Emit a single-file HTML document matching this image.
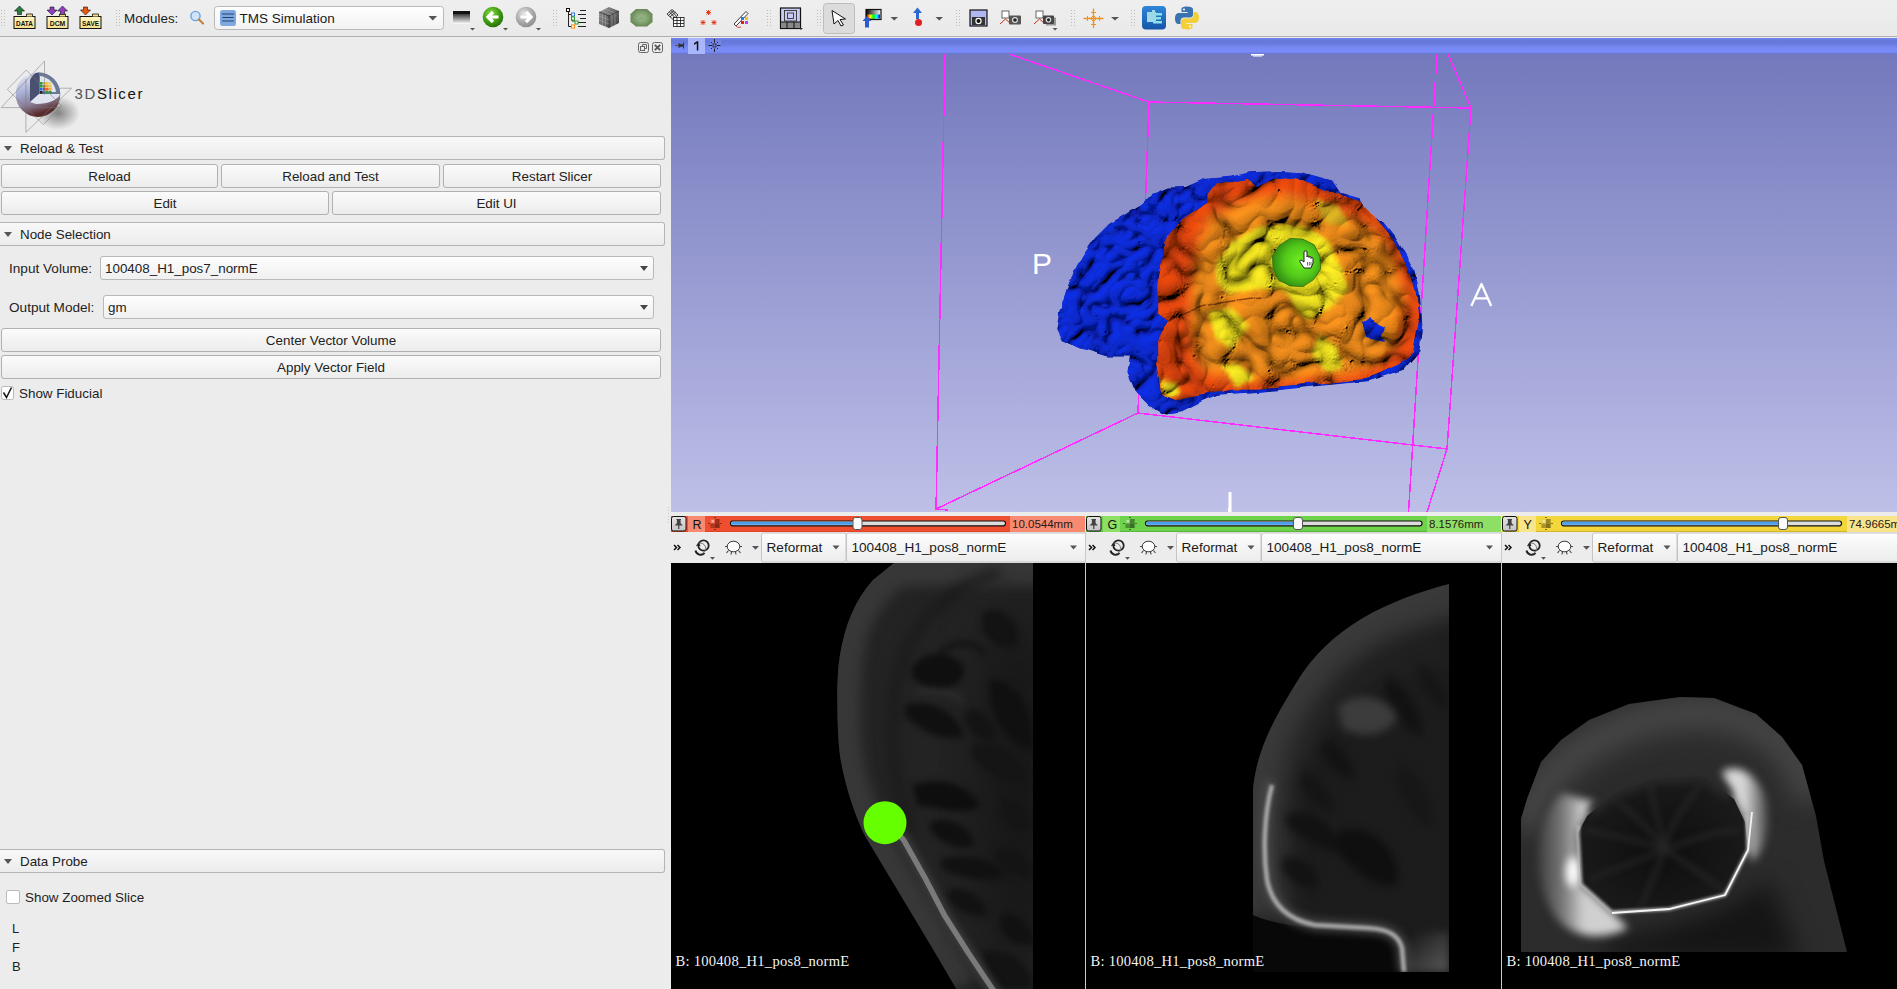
<!DOCTYPE html>
<html><head><meta charset="utf-8">
<style>
*{box-sizing:border-box;margin:0;padding:0}
html,body{width:1897px;height:989px;overflow:hidden;background:#ececec;font-family:"Liberation Sans",sans-serif;font-size:13px;color:#1e1e1e}
.a{position:absolute}
#tb{left:0;top:0;width:1897px;height:37px;background:#ececec;border-bottom:1px solid #b9b9b9}
.hdr{position:absolute;left:0;width:665px;height:24px;border:1px solid #b4b4b4;border-left:none;border-radius:0 3px 3px 0;background:linear-gradient(#f8f8f8,#ececec);}
.hdr .tri{position:absolute;left:4px;top:9px;width:0;height:0;border-left:4px solid transparent;border-right:4px solid transparent;border-top:5px solid #555}
.hdr span{position:absolute;left:20px;top:4px;font-size:13.4px;color:#222}
.btn{position:absolute;height:24px;border:1px solid #b1b1b1;border-radius:3px;background:linear-gradient(#fbfbfb,#ececec);text-align:center;line-height:22px;padding-top:1px;font-size:13.4px;color:#222}
.combo{position:absolute;height:24px;border:1px solid #b9b9b9;border-radius:3px;background:linear-gradient(#fdfdfd,#f0f0f0);font-size:13.4px;line-height:23px;padding-left:4px;color:#222}
.combo .dd{position:absolute;right:5px;top:9px;border-left:4.5px solid transparent;border-right:4.5px solid transparent;border-top:5px solid #444}
#v3d{left:671px;top:38px;width:1226px;height:474px;background:linear-gradient(#7378bc,#bdbfe7);overflow:hidden}
#v3dh{left:0;top:0;width:1226px;height:16px;background:linear-gradient(#7385ee 0%,#6676d8 18%,#6a7ade 35%,#7789f4 62%,#7a8cf6 88%,#6373d2 100%)}
.sbar{position:absolute;top:516px;height:16px}
.sctl{position:absolute;top:532px;height:31px;background:#ececec}
.sview{position:absolute;top:563px;height:426px;background:#000;overflow:hidden}
.slbl{position:absolute;left:4.5px;top:390px;font-family:"Liberation Serif",serif;font-size:14.6px;letter-spacing:0.25px;color:#f4f4f4}
</style></head><body>
<svg id="tb" class="a" style="left:0;top:0;border:none;background:none" width="1897" height="37" viewBox="0 0 1897 37">
<defs>
<linearGradient id="tbg" x1="0" y1="0" x2="0" y2="1"><stop offset="0" stop-color="#efefef"/><stop offset="1" stop-color="#e9e9e9"/></linearGradient>
<linearGradient id="fold" x1="0" y1="0" x2="0" y2="1"><stop offset="0" stop-color="#fff6c0"/><stop offset="1" stop-color="#f3e08a"/></linearGradient>
<linearGradient id="cmb" x1="0" y1="0" x2="0" y2="1"><stop offset="0" stop-color="#ffffff"/><stop offset="1" stop-color="#f2f2f2"/></linearGradient>
<linearGradient id="lay" x1="0" y1="0" x2="0" y2="1"><stop offset="0" stop-color="#000"/><stop offset="1" stop-color="#fff"/></linearGradient>
<radialGradient id="gbk" cx="0.4" cy="0.35" r="0.7"><stop offset="0" stop-color="#8ee04a"/><stop offset="0.6" stop-color="#3f9a12"/><stop offset="1" stop-color="#236b06"/></radialGradient>
<radialGradient id="gfw" cx="0.4" cy="0.35" r="0.7"><stop offset="0" stop-color="#e8e8e8"/><stop offset="0.6" stop-color="#a8a8a8"/><stop offset="1" stop-color="#8a8a8a"/></radialGradient>
<linearGradient id="cube" x1="0" y1="0" x2="1" y2="1"><stop offset="0" stop-color="#9a9a9a"/><stop offset="1" stop-color="#3a3a3a"/></linearGradient>
<radialGradient id="oct" cx="0.5" cy="0.5" r="0.6"><stop offset="0" stop-color="#a8c898"/><stop offset="1" stop-color="#5a7a48"/></radialGradient>
<linearGradient id="rainbow" x1="0" y1="0" x2="1" y2="0"><stop offset="0" stop-color="#f00"/><stop offset="0.25" stop-color="#ff0"/><stop offset="0.5" stop-color="#0f0"/><stop offset="0.75" stop-color="#0ff"/><stop offset="1" stop-color="#00f"/></linearGradient>
<linearGradient id="bw" x1="0" y1="0" x2="1" y2="0"><stop offset="0" stop-color="#000"/><stop offset="1" stop-color="#fff"/></linearGradient>
<linearGradient id="ext" x1="0" y1="0" x2="0" y2="1"><stop offset="0" stop-color="#2f86d8"/><stop offset="1" stop-color="#1456a8"/></linearGradient>
</defs>
<rect width="1897" height="36" fill="url(#tbg)"/>
<rect y="36" width="1897" height="1" fill="#b0b0b0"/>
<g fill="#bdbdbd"><rect x="1" y="10" width="1" height="1"/><rect x="4" y="10" width="1" height="1"/><rect x="1" y="13" width="1" height="1"/><rect x="4" y="13" width="1" height="1"/><rect x="1" y="16" width="1" height="1"/><rect x="4" y="16" width="1" height="1"/><rect x="1" y="19" width="1" height="1"/><rect x="4" y="19" width="1" height="1"/><rect x="1" y="22" width="1" height="1"/><rect x="4" y="22" width="1" height="1"/><rect x="1" y="25" width="1" height="1"/><rect x="4" y="25" width="1" height="1"/><rect x="116" y="10" width="1" height="1"/><rect x="119" y="10" width="1" height="1"/><rect x="116" y="13" width="1" height="1"/><rect x="119" y="13" width="1" height="1"/><rect x="116" y="16" width="1" height="1"/><rect x="119" y="16" width="1" height="1"/><rect x="116" y="19" width="1" height="1"/><rect x="119" y="19" width="1" height="1"/><rect x="116" y="22" width="1" height="1"/><rect x="119" y="22" width="1" height="1"/><rect x="116" y="25" width="1" height="1"/><rect x="119" y="25" width="1" height="1"/><rect x="553" y="10" width="1" height="1"/><rect x="556" y="10" width="1" height="1"/><rect x="553" y="13" width="1" height="1"/><rect x="556" y="13" width="1" height="1"/><rect x="553" y="16" width="1" height="1"/><rect x="556" y="16" width="1" height="1"/><rect x="553" y="19" width="1" height="1"/><rect x="556" y="19" width="1" height="1"/><rect x="553" y="22" width="1" height="1"/><rect x="556" y="22" width="1" height="1"/><rect x="553" y="25" width="1" height="1"/><rect x="556" y="25" width="1" height="1"/><rect x="767" y="10" width="1" height="1"/><rect x="770" y="10" width="1" height="1"/><rect x="767" y="13" width="1" height="1"/><rect x="770" y="13" width="1" height="1"/><rect x="767" y="16" width="1" height="1"/><rect x="770" y="16" width="1" height="1"/><rect x="767" y="19" width="1" height="1"/><rect x="770" y="19" width="1" height="1"/><rect x="767" y="22" width="1" height="1"/><rect x="770" y="22" width="1" height="1"/><rect x="767" y="25" width="1" height="1"/><rect x="770" y="25" width="1" height="1"/><rect x="817" y="10" width="1" height="1"/><rect x="820" y="10" width="1" height="1"/><rect x="817" y="13" width="1" height="1"/><rect x="820" y="13" width="1" height="1"/><rect x="817" y="16" width="1" height="1"/><rect x="820" y="16" width="1" height="1"/><rect x="817" y="19" width="1" height="1"/><rect x="820" y="19" width="1" height="1"/><rect x="817" y="22" width="1" height="1"/><rect x="820" y="22" width="1" height="1"/><rect x="817" y="25" width="1" height="1"/><rect x="820" y="25" width="1" height="1"/><rect x="956" y="10" width="1" height="1"/><rect x="959" y="10" width="1" height="1"/><rect x="956" y="13" width="1" height="1"/><rect x="959" y="13" width="1" height="1"/><rect x="956" y="16" width="1" height="1"/><rect x="959" y="16" width="1" height="1"/><rect x="956" y="19" width="1" height="1"/><rect x="959" y="19" width="1" height="1"/><rect x="956" y="22" width="1" height="1"/><rect x="959" y="22" width="1" height="1"/><rect x="956" y="25" width="1" height="1"/><rect x="959" y="25" width="1" height="1"/><rect x="1071" y="10" width="1" height="1"/><rect x="1074" y="10" width="1" height="1"/><rect x="1071" y="13" width="1" height="1"/><rect x="1074" y="13" width="1" height="1"/><rect x="1071" y="16" width="1" height="1"/><rect x="1074" y="16" width="1" height="1"/><rect x="1071" y="19" width="1" height="1"/><rect x="1074" y="19" width="1" height="1"/><rect x="1071" y="22" width="1" height="1"/><rect x="1074" y="22" width="1" height="1"/><rect x="1071" y="25" width="1" height="1"/><rect x="1074" y="25" width="1" height="1"/><rect x="1131" y="10" width="1" height="1"/><rect x="1134" y="10" width="1" height="1"/><rect x="1131" y="13" width="1" height="1"/><rect x="1134" y="13" width="1" height="1"/><rect x="1131" y="16" width="1" height="1"/><rect x="1134" y="16" width="1" height="1"/><rect x="1131" y="19" width="1" height="1"/><rect x="1134" y="19" width="1" height="1"/><rect x="1131" y="22" width="1" height="1"/><rect x="1134" y="22" width="1" height="1"/><rect x="1131" y="25" width="1" height="1"/><rect x="1134" y="25" width="1" height="1"/></g>
<!-- DATA -->
<g>
<rect x="14" y="16.5" width="21" height="12" fill="url(#fold)" stroke="#111" stroke-width="1"/>
<path d="M26.5 16.5 V14 H32.5 V16.5" fill="#f3e08a" stroke="#111" stroke-width="0.8"/>
<path d="M19.5 6 L24.5 11 H21.5 V14.5 H17.5 V11 H14.5Z" fill="#2c7a3e" stroke="#111" stroke-width="0.6"/>
<text x="24.5" y="26.5" font-family="Liberation Sans" font-weight="bold" font-size="8" text-anchor="middle" fill="#111" transform="translate(24.5 0) scale(0.8 1) translate(-24.5 0)">DATA</text>
</g>
<g>
<rect x="47" y="16.5" width="21" height="12" fill="url(#fold)" stroke="#111" stroke-width="1"/>
<path d="M59.5 16.5 V14 H65.5 V16.5" fill="#f3e08a" stroke="#111" stroke-width="0.8"/>
<path d="M52 15 L57 10 H54 V7 H50 V10 H47Z" fill="#9040c0" stroke="#111" stroke-width="0.6"/>
<path d="M62.5 6 L67.5 11 H64.5 V14.5 H60.5 V11 H57.5Z" fill="#9040c0" stroke="#111" stroke-width="0.6"/>
<text x="57.5" y="26.5" font-family="Liberation Sans" font-weight="bold" font-size="8" text-anchor="middle" fill="#111" transform="translate(57.5 0) scale(0.85 1) translate(-57.5 0)">DCM</text>
</g>
<g>
<rect x="80" y="16.5" width="21" height="12" fill="url(#fold)" stroke="#111" stroke-width="1"/>
<path d="M92.5 16.5 V14 H98.5 V16.5" fill="#f3e08a" stroke="#111" stroke-width="0.8"/>
<path d="M85.5 15 L90.5 10 H87.5 V7 H83.5 V10 H80.5Z" fill="#e85a10" stroke="#111" stroke-width="0.6"/>
<text x="90.5" y="26.5" font-family="Liberation Sans" font-weight="bold" font-size="8" text-anchor="middle" fill="#111" transform="translate(90.5 0) scale(0.8 1) translate(-90.5 0)">SAVE</text>
</g>
<text x="124" y="23" font-family="Liberation Sans" font-size="13.4" fill="#1a1a1a">Modules:</text>
<!-- magnifier -->
<circle cx="195.5" cy="16" r="4.6" fill="#cfe4fa" stroke="#6aa0d8" stroke-width="1.4"/>
<path d="M199 19.5 L203 23.5" stroke="#c08040" stroke-width="2.2" stroke-linecap="round"/>
<!-- combo -->
<rect x="214.5" y="6.5" width="229" height="23" rx="3" fill="url(#cmb)" stroke="#b8b8b8"/>
<rect x="220" y="10" width="16" height="16" rx="2.5" fill="#7ea8e0"/>
<g fill="#24406e"><rect x="222" y="13.5" width="12" height="1"/><rect x="222.5" y="17" width="11" height="1"/><rect x="222" y="20.5" width="12" height="1"/></g>
<text x="239.5" y="23" font-family="Liberation Sans" font-size="13.5" fill="#1a1a1a">TMS Simulation</text>
<path d="M428.5 16 H437 L432.75 20.5Z" fill="#555"/>
<!-- layout -->
<rect x="453" y="11" width="17" height="13" fill="url(#lay)"/>
<rect x="453" y="11" width="17" height="3" fill="#111"/>
<path d="M470 28 H475 L472.5 30.5Z" fill="#555"/>
<circle cx="493" cy="17" r="10.3" fill="url(#gbk)"/>
<path d="M498.5 17 H489 M493 12 L488 17 L493 22" stroke="#fff" stroke-width="3.2" fill="none" stroke-linejoin="miter"/>
<path d="M503 28 H508 L505.5 30.5Z" fill="#555"/>
<circle cx="526" cy="17" r="10.3" fill="url(#gfw)"/>
<path d="M520.5 17 H530 M526 12 L531 17 L526 22" stroke="#fff" stroke-width="3.2" fill="none"/>
<path d="M536 28 H541 L538.5 30.5Z" fill="#555"/>
<!-- hierarchy -->
<g stroke="#222" stroke-width="1" fill="none">
<path d="M568.5 10 V26.5 M568.5 14.5 H572 M572 14.5 V21 H575 M568.5 26.5 H572 M580 10.5 H586 M578 14.5 H586 M580 18.5 H586 M578 22.5 H586 M578 26.5 H586"/>
</g>
<rect x="566.5" y="8.5" width="3" height="3" fill="#fff" stroke="#111"/>
<rect x="571.5" y="13" width="3" height="3" fill="#fff" stroke="#2a7ae0"/>
<rect x="571.5" y="17" width="3" height="3" fill="#fff" stroke="#2a9a2a"/>
<rect x="575" y="21" width="3" height="3" fill="#fff" stroke="#2a9a2a"/>
<rect x="571.5" y="25" width="3" height="3" fill="#fff" stroke="#ff8800"/>
<!-- cube -->
<path d="M599 12 L609 7 L619 11 L619 23 L609 28 L599 24Z" fill="url(#cube)"/>
<path d="M599 12 L609 16 L619 11 M609 16 V28" stroke="#2a2a2a" stroke-width="0.7" fill="none"/>
<g stroke="#bbb" stroke-width="0.4" fill="none"><path d="M602 10.5 L612 15 M605 9 L615 13 M599 16 L609 20 M599 20 L609 24 M612 15 V27 M615 13.5 V25.5 M602.5 13.5 V25.5 M605.5 15 V26.5"/></g>
<!-- octagon -->
<polygon points="636,9 647,9 652.5,14 652.5,22 647,26.5 636,26.5 630.5,22 630.5,14" fill="url(#oct)"/>
<g stroke="#7a9a6a" stroke-width="0.5"><path d="M636 9 L647 26.5 M647 9 L636 26.5 M630.5 14 L652.5 22 M652.5 14 L630.5 22"/></g>
<!-- grid -->
<g stroke="#111" stroke-width="0.8" fill="none">
<path d="M667 14 L672 9.5 L678 15 L673 19.5Z M668.5 15.5 L674 10.5 M670 17 L675.5 12 M669.2 11.8 L675 17.5 M670.8 10.5 L676.5 16.2"/>
<rect x="673.5" y="17.5" width="10.5" height="9" fill="#fff"/>
<path d="M677 17.5 V26.5 M680.5 17.5 V26.5 M673.5 20.5 H684 M673.5 23.5 H684"/>
</g>
<!-- red stars -->
<g stroke="#e03010" stroke-width="0.9">
<path d="M708.5 10 V15 M706 12.5 H711 M706.5 10.5 L710.5 14.5 M710.5 10.5 L706.5 14.5"/>
<path d="M703 20 V25 M700.5 22.5 H705.5 M701 20.5 L705 24.5 M705 20.5 L701 24.5"/>
<path d="M714 20 V25 M711.5 22.5 H716.5 M712 20.5 L716 24.5 M716 20.5 L712 24.5"/>
</g>
<!-- pen -->
<path d="M734 24 L746 11.5 L748 13.5 L736 26Z" fill="#fff" stroke="#222" stroke-width="0.9"/>
<path d="M735 25 Q738 29 741 27" stroke="#d02020" stroke-width="0.8" fill="none"/>
<rect x="741" y="17" width="3" height="3" fill="#2a7ae0"/><rect x="745" y="17" width="3" height="3" fill="#f0c020"/>
<rect x="741" y="21" width="3" height="3" fill="#e02020"/><rect x="745" y="21" width="3" height="3" fill="#c040e0"/>
<!-- layout icon -->
<rect x="780.5" y="8" width="20" height="20.5" fill="#c8cbf0" stroke="#111" stroke-width="1.2"/>
<rect x="784.5" y="10.5" width="12" height="10.5" fill="none" stroke="#333" stroke-width="0.9"/>
<rect x="787.5" y="13" width="6" height="5.5" fill="none" stroke="#333" stroke-width="0.9"/>
<rect x="780.5" y="22" width="20" height="6.5" fill="#888" stroke="#111" stroke-width="1"/>
<path d="M787 22 V28.5 M794 22 V28.5" stroke="#111" stroke-width="1"/>
<path d="M799 28 H803 L801 30Z" fill="#333"/>
<!-- selected arrow -->
<rect x="823.5" y="3.5" width="31" height="30" rx="3" fill="#dcdcdc" stroke="#bdbdbd"/>
<path d="M832 10.5 L845.5 19 L840 19.5 L843.5 25 L841 26 L838 20.5 L834 24Z" fill="#fff" stroke="#111" stroke-width="1"/>
<!-- colorbar -->
<rect x="866" y="9.5" width="15" height="10" fill="url(#bw)" stroke="#111" stroke-width="1.2"/>
<rect x="867" y="14.5" width="13" height="4" fill="url(#rainbow)"/>
<path d="M867 16 L871.5 21 H869 V27.5 H865 V21 H862.5Z" fill="#2a5ad0"/>
<path d="M890.5 17 H898 L894.25 20.5Z" fill="#555"/>
<!-- blue arrow red dot -->
<path d="M917.5 7.5 L922 13 H919 V19 H916 V13 H913Z" fill="#2a6ad0"/>
<circle cx="918.5" cy="22.5" r="3.5" fill="#e02020"/>
<path d="M935.5 17 H943 L939.25 20.5Z" fill="#555"/>
<!-- camera1 -->
<rect x="970" y="10" width="17" height="16" fill="#b0b6f0" stroke="#111" stroke-width="1.2"/>
<path d="M972 17 H985 V25 H972Z" fill="#333"/>
<circle cx="978.5" cy="21" r="3.2" fill="#fff"/><circle cx="978.5" cy="21" r="2" fill="#111"/>
<!-- camera2 -->
<rect x="1002" y="11" width="7" height="7" fill="#fff" stroke="#444" stroke-width="0.8"/>
<path d="M1000 24 L1005.5 19 L1011 24" stroke="#c03010" stroke-width="1" fill="none"/>
<rect x="1009" y="15.5" width="12" height="9" rx="1" fill="#555"/>
<circle cx="1015" cy="20" r="3" fill="#ddd"/><circle cx="1015" cy="20" r="1.8" fill="#222"/>
<!-- camera3 -->
<rect x="1036" y="11" width="7" height="7" fill="#fff" stroke="#444" stroke-width="0.8"/>
<path d="M1034 24 L1039.5 19 L1045 24" stroke="#c03010" stroke-width="1" fill="none"/>
<rect x="1046" y="17.5" width="10" height="8" fill="#999"/>
<rect x="1043" y="15.5" width="11" height="8.5" rx="1" fill="#444"/>
<circle cx="1048.5" cy="19.8" r="2.8" fill="#ddd"/><circle cx="1048.5" cy="19.8" r="1.6" fill="#222"/>
<path d="M1052.5 28 H1057.5 L1055 30.5Z" fill="#555"/>
<!-- crosshair -->
<g stroke="#f0901e" stroke-width="1.3" fill="none">
<path d="M1093.5 8.5 V28 M1083.5 18.5 H1103.5"/>
<path d="M1091 12.5 H1096 M1091 24.5 H1096 M1087.5 16 V21 M1099.5 16 V21" stroke-width="1"/>
<path d="M1093.5 15.5 L1096.5 18.5 L1093.5 21.5 L1090.5 18.5Z" stroke-width="1"/>
</g>
<path d="M1111 17 H1119 L1115 20.5Z" fill="#555"/>
<!-- extension -->
<rect x="1142" y="6" width="24" height="23.5" rx="4" fill="url(#ext)"/>
<path d="M1147 12 H1152 V10 H1155 V12 H1156 V22 H1147Z" fill="#a0d8e8"/>
<path d="M1153 13 H1162 V15.5 H1156 V17 H1161 V19.5 H1156 V21 H1162 V23.5 H1153Z" fill="#8fe0e8"/>
<!-- python -->
<path d="M1187 6.5 C1181 6.5 1181.5 9 1181.5 9 V12 H1187.5 V13 H1179 C1179 13 1175 12.5 1175 18.5 C1175 24.5 1178.5 24 1178.5 24 H1180.5 V21 C1180.5 21 1180.5 17.5 1184 17.5 H1190 C1190 17.5 1193 17.5 1193 14.5 V9.5 C1193 9.5 1193.5 6.5 1187 6.5Z" fill="#3a74b0"/>
<path d="M1187 29.5 C1193 29.5 1192.5 27 1192.5 27 V24 H1186.5 V23 H1195 C1195 23 1199 23.5 1199 17.5 C1199 11.5 1195.5 12 1195.5 12 H1193.5 V15 C1193.5 15 1193.5 18.5 1190 18.5 H1184 C1184 18.5 1181 18.5 1181 21.5 V26.5 C1181 26.5 1180.5 29.5 1187 29.5Z" fill="#f3cf3a"/>
<circle cx="1184" cy="9.5" r="1" fill="#fff"/><circle cx="1190" cy="26.5" r="1" fill="#fff"/>
</svg>

<!-- left panel -->
<svg class="a" style="left:0;top:55px" width="150" height="80" viewBox="0 55 150 80">
<defs>
<radialGradient id="lsh" cx="0.5" cy="0.5" r="0.5"><stop offset="0" stop-color="#000" stop-opacity="0.45"/><stop offset="1" stop-color="#000" stop-opacity="0"/></radialGradient>
<linearGradient id="lsp" x1="0" y1="0" x2="0.3" y2="1"><stop offset="0" stop-color="#f4f6fb"/><stop offset="0.45" stop-color="#a9b0d6"/><stop offset="0.75" stop-color="#8a7f98"/><stop offset="1" stop-color="#5a2a2a"/></linearGradient>
</defs>
<ellipse cx="58" cy="113" rx="22" ry="17" fill="url(#lsh)"/>
<circle cx="38" cy="94.6" r="22.3" fill="url(#lsp)"/>
<path d="M38 72.3 A22.3 22.3 0 0 1 60.3 94.6 L38 94.6Z" fill="#6b7898"/>
<path d="M40 76 A18 18 0 0 1 56 92 L40 92Z" fill="#dfe6ee"/>
<g><rect x="40" y="82" width="2.6" height="2.6" fill="#2a9a3a"/><rect x="43" y="82" width="2.6" height="2.6" fill="#f0b020"/><rect x="46" y="82" width="2.6" height="2.6" fill="#f0c840"/><rect x="49" y="82" width="2.6" height="2.6" fill="#f0d070"/>
<rect x="40" y="85" width="2.6" height="2.6" fill="#2a9a3a"/><rect x="43" y="85" width="2.6" height="2.6" fill="#f06020"/><rect x="46" y="85" width="2.6" height="2.6" fill="#f0b020"/><rect x="49" y="85" width="2.6" height="2.6" fill="#f0c840"/>
<rect x="40" y="88" width="2.6" height="2.6" fill="#2a6ae0"/><rect x="43" y="88" width="2.6" height="2.6" fill="#f02020"/><rect x="46" y="88" width="2.6" height="2.6" fill="#f06020"/><rect x="49" y="88" width="2.6" height="2.6" fill="#f0b020"/>
<rect x="40" y="91" width="2.6" height="2.6" fill="#222"/><rect x="43" y="91" width="2.6" height="2.6" fill="#2a6ae0"/><rect x="46" y="91" width="2.6" height="2.6" fill="#2a9a3a"/><rect x="49" y="91" width="2.6" height="2.6" fill="#2a9a3a"/></g>
<path d="M30 80 C33 73 37 72 39 73 L39 94 L30 102Z" fill="#4a5070"/>
<path d="M30 102 L39 94 L60 94 C58 100 48 104 36 104Z" fill="#dfe3f0"/>
<g stroke="#777" stroke-width="0.5" fill="none">
<path d="M44.5 61 V95 M44.5 61 L1.2 107.6 H60"/>
<path d="M26.3 70 L7.3 89.4 L43.3 124.6 L61.9 106 Z"/>
<path d="M71.6 88.2 L25.9 132.3 V79 M71.6 88.2 H59"/>
</g>
<text x="74.5" y="99" font-family="Liberation Sans" font-size="15" letter-spacing="1.6" fill="#555" stroke="#fff" stroke-width="0.0">3D<tspan fill="#111">Slicer</tspan></text>
</svg>
<svg class="a" style="left:636px;top:40px" width="30" height="15" viewBox="636 40 30 15">
<rect x="638.5" y="42.5" width="10" height="10" rx="2" fill="none" stroke="#666" stroke-width="1"/>
<rect x="640.5" y="46.5" width="4" height="4" fill="none" stroke="#666" stroke-width="1"/>
<path d="M642.5 46.5 V44.5 H646.5 V48.5 H644.5" fill="none" stroke="#666" stroke-width="1"/>
<rect x="652.5" y="42.5" width="10" height="10" rx="2" fill="none" stroke="#666" stroke-width="1"/>
<path d="M654.8 44.8 L660.2 50.2 M660.2 44.8 L654.8 50.2" stroke="#555" stroke-width="1.8"/>
</svg>
<svg class="a" style="left:666px;top:500px" width="5" height="40" viewBox="666 500 5 40"><g fill="#c4c4c4"><rect x="668" y="507" width="1" height="1"/><rect x="668" y="510" width="1" height="1"/><rect x="668" y="513" width="1" height="1"/><rect x="668" y="516" width="1" height="1"/><rect x="668" y="519" width="1" height="1"/><rect x="668" y="522" width="1" height="1"/></g></svg>

<div class="hdr" style="top:136px"><div class="tri"></div><span>Reload &amp; Test</span></div>
<div class="btn" style="left:1px;top:164px;width:217px">Reload</div>
<div class="btn" style="left:221px;top:164px;width:219px">Reload and Test</div>
<div class="btn" style="left:443px;top:164px;width:218px">Restart Slicer</div>
<div class="btn" style="left:1px;top:191px;width:328px">Edit</div>
<div class="btn" style="left:332px;top:191px;width:329px">Edit UI</div>
<div class="hdr" style="top:222px"><div class="tri"></div><span>Node Selection</span></div>
<div class="a" style="left:9px;top:261px;font-size:13.6px">Input Volume:</div>
<div class="combo" style="left:100px;top:256px;width:554px">100408_H1_pos7_normE<div class="dd"></div></div>
<div class="a" style="left:9px;top:300px;font-size:13.6px">Output Model:</div>
<div class="combo" style="left:103px;top:295px;width:551px">gm<div class="dd"></div></div>
<div class="btn" style="left:1px;top:328px;width:660px">Center Vector Volume</div>
<div class="btn" style="left:1px;top:355px;width:660px">Apply Vector Field</div>
<svg class="a" style="left:0;top:384px" width="16" height="17" viewBox="0 384 16 17"><rect x="1.5" y="386.5" width="12" height="13" rx="2" fill="#fff" stroke="#b8b8b8"/><path d="M3.5 392.5 L6.5 397.5 L11.5 387.5" stroke="#111" stroke-width="1.5" fill="none"/></svg>
<div class="a" style="left:19px;top:386px;font-size:13.4px">Show Fiducial</div>
<div class="hdr" style="top:849px"><div class="tri"></div><span>Data Probe</span></div>
<div class="a" style="left:6px;top:890px;width:14px;height:14px;border:1px solid #bbb;border-radius:2px;background:#fff"></div>
<div class="a" style="left:25px;top:890px;font-size:13.4px">Show Zoomed Slice</div>
<div class="a" style="left:12px;top:921px;font-size:13px">L</div>
<div class="a" style="left:12px;top:940px;font-size:13px">F</div>
<div class="a" style="left:12px;top:959px;font-size:13px">B</div>

<!-- 3D view -->
<div id="v3d" class="a">
<svg class="a" style="left:0;top:0" width="1226" height="474" viewBox="671 38 1226 474">
<defs>
<linearGradient id="bg3" x1="0" y1="0" x2="0" y2="1"><stop offset="0" stop-color="#7176bb"/><stop offset="1" stop-color="#bec0e8"/></linearGradient>
<filter id="gyriB" x="1030" y="150" width="420" height="290" filterUnits="userSpaceOnUse">
<feTurbulence type="fractalNoise" baseFrequency="0.06" numOctaves="2" seed="3" result="dn"/>
<feDisplacementMap in="SourceGraphic" in2="dn" scale="5" xChannelSelector="R" yChannelSelector="G" result="disp"/>
<feTurbulence type="turbulence" baseFrequency="0.036" numOctaves="2" seed="8" result="n"/>
<feColorMatrix in="n" type="matrix" values="0 0 0 0 0  0 0 0 0 0  0 0 0 0 0  1 0 0 0 0" result="h"/>
<feComponentTransfer in="h" result="h2"><feFuncA type="table" tableValues="0 0.55 0.85 1 1"/></feComponentTransfer>
<feDiffuseLighting in="h2" surfaceScale="4" diffuseConstant="1.05" lighting-color="#fff" result="light"><feDistantLight azimuth="235" elevation="50"/></feDiffuseLighting>
<feComposite in="disp" in2="light" operator="arithmetic" k1="0.88" k2="0" k3="0" k4="0" result="lit"/>
<feColorMatrix in="n" type="matrix" values="1 0 0 0 0  1 0 0 0 0  1 0 0 0 0  0 0 0 0 1" result="g"/>
<feComponentTransfer in="g" result="lines"><feFuncR type="table" tableValues="0.45 0.9 1 1 1 1 1"/><feFuncG type="table" tableValues="0.45 0.9 1 1 1 1 1"/><feFuncB type="table" tableValues="0.45 0.9 1 1 1 1 1"/></feComponentTransfer>
<feComposite in="lit" in2="lines" operator="arithmetic" k1="1" k2="0" k3="0" k4="0" result="fin"/>
<feComponentTransfer in="fin"><feFuncA type="linear" slope="1.25" intercept="0"/></feComponentTransfer>
</filter>
<filter id="gyriO" x="1030" y="150" width="420" height="290" filterUnits="userSpaceOnUse">
<feTurbulence type="fractalNoise" baseFrequency="0.03" numOctaves="2" seed="3" result="dn"/>
<feDisplacementMap in="SourceGraphic" in2="dn" scale="9" xChannelSelector="R" yChannelSelector="G" result="disp"/>
<feTurbulence type="turbulence" baseFrequency="0.022" numOctaves="2" seed="21" result="n"/>
<feColorMatrix in="n" type="matrix" values="0 0 0 0 0  0 0 0 0 0  0 0 0 0 0  1 0 0 0 0" result="h"/>
<feComponentTransfer in="h" result="h2"><feFuncA type="table" tableValues="0 0.55 0.85 1 1"/></feComponentTransfer>
<feDiffuseLighting in="h2" surfaceScale="7" diffuseConstant="1.05" lighting-color="#fff" result="light"><feDistantLight azimuth="235" elevation="50"/></feDiffuseLighting>
<feComposite in="disp" in2="light" operator="arithmetic" k1="1.06" k2="0" k3="0" k4="0" result="lit"/>
<feColorMatrix in="n" type="matrix" values="1 0 0 0 0  1 0 0 0 0  1 0 0 0 0  0 0 0 0 1" result="g"/>
<feComponentTransfer in="g" result="lines"><feFuncR type="table" tableValues="0.3 0.85 1 1 1 1 1 1"/><feFuncG type="table" tableValues="0.3 0.85 1 1 1 1 1 1"/><feFuncB type="table" tableValues="0.3 0.85 1 1 1 1 1 1"/></feComponentTransfer>
<feComposite in="lit" in2="lines" operator="arithmetic" k1="1" k2="0" k3="0" k4="0" result="fin"/>
<feComponentTransfer in="fin"><feFuncA type="linear" slope="1.25" intercept="0"/></feComponentTransfer>
</filter>
<filter id="cblur" x="1030" y="150" width="420" height="290" filterUnits="userSpaceOnUse"><feGaussianBlur stdDeviation="6"/></filter>
<filter id="cblur2" x="1030" y="150" width="420" height="290" filterUnits="userSpaceOnUse"><feGaussianBlur stdDeviation="2"/></filter>
<clipPath id="orclip"><polygon points="1206.6,195.5 1214.7,184.6 1247.5,179.1 1258.4,187.3 1272.1,179.1 1293.9,176.4 1313.0,184.6 1334.9,192.8 1359.5,201.0 1378.6,222.8 1394.9,241.9 1408.6,269.2 1416.8,296.5 1419.5,323.8 1414.1,351.1 1394.9,367.5 1367.6,378.4 1340.3,381.2 1313.0,383.9 1285.7,386.6 1258.4,389.4 1231.1,389.4 1203.8,394.8 1176.5,400.3 1162.9,394.8 1157.4,364.8 1157.4,337.5 1168.3,321.1 1157.4,312.9 1157.4,282.9 1162.9,258.3 1168.3,236.5 1182.0,220.1 1206.6,203.7"/></clipPath>
<radialGradient id="sph" cx="0.58" cy="0.48" r="0.6"><stop offset="0" stop-color="#6ef020"/><stop offset="0.55" stop-color="#52c81a"/><stop offset="1" stop-color="#2e8410"/></radialGradient>
</defs>
<rect x="671" y="38" width="1226" height="474" fill="url(#bg3)"/>
<g stroke="#ff2cff" stroke-width="1.5" fill="none" shape-rendering="crispEdges">
<path d="M945 54 L936 510 M1009 54 L1149 102 L1471 108 L1447 449 L1138 413 L1149 102 M1448 54 L1471 108 M936 509 L1138 413 M1437 54 L1408.5 512 M1447 449 L1427 512 M936 509 L948 510"/>
</g>
<g filter="url(#gyriB)">
<polygon fill="#0c2ee6" points="1056.4,329.3 1059.1,312.9 1070.0,280.1 1082.0,257.0 1095.0,238.0 1109.0,224.0 1127.4,213.0 1142.0,204.0 1153.0,193.0 1167.0,187.5 1185.6,187.0 1203.8,179.1 1231.1,176.4 1250.2,172.3 1280.3,170.9 1302.1,172.3 1332.2,180.5 1340.3,192.8 1359.5,198.2 1364.9,214.6 1384.0,222.8 1394.9,236.5 1414.1,269.2 1419.5,291.1 1422.3,323.8 1419.5,351.1 1403.1,370.2 1367.6,381.2 1313.0,386.6 1258.4,392.1 1217.5,394.8 1203.8,400.3 1182.0,411.2 1162.9,413.9 1149.2,405.7 1135.6,392.1 1127.4,373.0 1130.1,356.6 1108.3,356.6 1081.0,348.4 1061.8,340.2"/>
</g>
<g filter="url(#gyriO)">
<g clip-path="url(#orclip)">
<rect x="1150" y="170" width="280" height="240" fill="#ea4a10"/>
<g filter="url(#cblur)">
<path fill="#f4901c" d="M1205 225 C1240 180 1335 190 1385 240 C1410 275 1410 340 1380 365 C1320 385 1240 385 1205 375 C1185 340 1185 270 1205 225Z"/>
</g>
<g filter="url(#cblur2)" fill="#f8ea22">
<polygon points="1217.5,261.0 1231.1,241.9 1258.4,228.3 1285.7,222.8 1313.0,231.0 1329.4,241.9 1340.3,269.2 1345.8,291.1 1326.7,310.2 1307.6,318.4 1293.9,307.4 1280.3,288.3 1258.4,288.3 1231.1,293.8 1220.2,282.9"/>
<polygon points="1209.3,312.9 1231.1,307.4 1247.5,323.8 1231.1,351.1 1214.7,337.5"/>
<polygon points="1318.5,334.7 1340.3,345.7 1343.1,367.5 1326.7,373.0 1313.0,356.6"/>
<polygon points="1220.2,367.5 1236.6,362.0 1253.0,378.4 1236.6,386.6"/>
<polygon points="1160.1,378.4 1176.5,381.2 1182.0,394.8 1165.6,397.5"/>
<polygon fill="#d8b020" points="1313.0,195.5 1340.3,206.4 1348.5,225.5 1326.7,222.8"/>
</g>
<path fill="#0c2ee6" d="M1362 324 L1370 318 L1376 322 L1384 326 L1380 334 L1384 340 L1374 338 L1366 336Z"/>
<path d="M1162 324 C1175 318 1190 311 1205 307 C1225 301 1245 299 1262 297" stroke="#6a2a0a" stroke-width="1.3" fill="none" opacity="0.7"/>
</g>
</g>
<polygon fill="url(#sph)" stroke="#2a6a10" stroke-width="0.8" points="1320.6,269.0 1313.6,279.6 1303.0,286.6 1290.2,285.9 1278.8,280.2 1273.1,268.8 1272.4,256.0 1279.4,245.4 1290.0,238.4 1302.8,239.1 1314.2,244.8 1319.9,256.2"/>
<path d="M1304 252 L1304 262 L1302 260.5 C1300.5 259.5 1299 260.5 1300 262 L1304 268 L1311 268 L1313 263 L1313 258.5 C1313 257 1311 257 1311 258.5 L1311 257.5 C1311 256 1309 256 1309 257.5 L1309 257 C1309 255.5 1307 255.5 1307 257 L1307 252 C1307 250.5 1304 250.5 1304 252Z" fill="#fff" stroke="#111" stroke-width="0.9"/>
<path d="M1307.5 262 V265.5 M1309.3 262 V265.5 M1311 262 V265.5" stroke="#111" stroke-width="0.6"/>
<text x="1032" y="274" font-family="Liberation Sans" font-size="30" fill="#fff">P</text>
<path d="M1471.3 306 L1481.5 284 L1491.2 306 M1475.3 298.3 H1487.6" stroke="#fff" stroke-width="2.3" fill="none" stroke-linejoin="round"/>
</svg>
<div id="v3dh" class="a"></div>
<svg class="a" style="left:0;top:0" width="60" height="16" viewBox="671 38 60 16">
<path d="M675 45.5 H679" stroke="#555" stroke-width="1"/>
<path d="M678.5 43 L681 44.2 H683 V42.5 H684 V48.5 H683 V46.8 H681 L678.5 48Z" fill="#333"/>
<rect x="688" y="38" width="17" height="16" fill="#aab6fb"/>
<path d="M694 43.2 L697 41.2 H698.3 V50.5 H696.8 V43.3 L694 45Z" fill="#111"/>
<rect x="710" y="40" width="11" height="11" fill="#8090f0" opacity="0.5"/>
<g stroke="#222" stroke-width="1.1">
<path d="M714.5 39 V42.5 M714.5 48.5 V52 M708.5 45.5 H712 M717 45.5 H720.5"/>
</g>
<rect x="713" y="44" width="3" height="3" fill="none" stroke="#222" stroke-width="0.8"/>
<g fill="#222"><rect x="711" y="42" width="1" height="1"/><rect x="717" y="42" width="1" height="1"/><rect x="711" y="48" width="1" height="1"/><rect x="717" y="48" width="1" height="1"/></g>
</svg>
<svg class="a" style="left:0;top:0" width="1226" height="474" viewBox="671 38 1226 474">
<rect x="1251" y="54" width="13" height="1.5" fill="#fff"/><rect x="1253" y="55.5" width="9" height="1" fill="#fff"/>
<rect x="1228.5" y="492" width="3" height="20" fill="#fff"/><rect x="1228" y="508" width="1" height="4" fill="#fff"/>
</svg>
</div>

<!-- slice bars -->
<!--SLICECTL--><svg class="a" style="left:671px;top:514px" width="414" height="49" viewBox="671 514 414 49"><defs><linearGradient id="pinr" x1="0" y1="0" x2="0" y2="1"><stop offset="0" stop-color="#e4e4e4"/><stop offset="1" stop-color="#c4c4c4"/></linearGradient>
<linearGradient id="barr" x1="0" y1="0" x2="0" y2="1"><stop offset="0" stop-color="#f04e30"/><stop offset="0.9" stop-color="#f04e30"/><stop offset="1" stop-color="#d84020"/></linearGradient>
<linearGradient id="cmbr" x1="0" y1="0" x2="0" y2="1"><stop offset="0" stop-color="#fdfdfd"/><stop offset="1" stop-color="#ececec"/></linearGradient></defs><rect x="671" y="514" width="414" height="2" fill="#ececec"/><rect x="671" y="516" width="414" height="16" fill="url(#barr)"/><rect x="688" y="516" width="17" height="16" fill="#f88a72"/><rect x="1010" y="516" width="75" height="16" fill="#f88a72"/><rect x="671.5" y="516.5" width="14.5" height="14.5" rx="2" fill="url(#pinr)" stroke="#111" stroke-width="1"/><path d="M676.5 519.5 H681 M677.5 519.5 V523.5 L676 525 H681.5 L680 523.5 V519.5 M678.75 525 V529" stroke="#444" stroke-width="1.2" fill="#444"/><text x="692.5" y="529" font-family="Liberation Sans" font-size="12.5" fill="#111">R</text><rect x="710.5" y="519" width="4.5" height="4.5" fill="#fff" opacity="0.25"/><rect x="715.0" y="519" width="4.5" height="4.5" fill="#000" opacity="0.45"/><rect x="710.5" y="523.5" width="4.5" height="4.5" fill="#000" opacity="0.35"/><rect x="715.0" y="523.5" width="4.5" height="4.5" fill="#000" opacity="0.6"/><rect x="710.5" y="519" width="9" height="9" fill="#d84020" opacity="0.35"/><rect x="711.5" y="520" width="2.5" height="2.5" fill="#fff" opacity="0.45"/><g fill="#111"><rect x="708.5" y="523" width="1" height="1"/><rect x="720.5" y="523" width="1" height="1"/><rect x="714.5" y="517" width="1" height="1"/><rect x="714.5" y="529" width="1" height="1"/></g><rect x="730.5" y="521" width="275" height="4.8" rx="2.2" fill="#dcdcdc" stroke="#111" stroke-width="1.2"/><rect x="731.5" y="522" width="121.0" height="2.8" fill="#4aa0f0"/><rect x="853.0" y="517.5" width="9" height="12" rx="2.5" fill="#fafafa" stroke="#555" stroke-width="1"/><text x="1012" y="528" font-family="Liberation Sans" font-size="11.5" fill="#2a1a18">10.0544mm</text><rect x="671" y="532" width="414" height="31" fill="#ececec"/><path d="M674 545 L676.5 547.5 L674 550 M677.5 545 L680 547.5 L677.5 550" stroke="#111" stroke-width="1.5" fill="none"/><circle cx="703.5" cy="545.5" r="5.2" stroke="#222" stroke-width="1.8" fill="none"/><path d="M695.5 550.5 A5.2 5.2 0 0 0 704.5 553" stroke="#222" stroke-width="1.9" fill="none"/><path d="M698 543.5 A5.2 5.2 0 0 1 702.5 553.5" stroke="#777" stroke-width="1" fill="none"/><path d="M696.5 546 L698.5 543.5 L700 546" stroke="#222" stroke-width="1.2" fill="none"/><path d="M710 557 H715 L712.5 559.8Z" fill="#555"/><ellipse cx="733.5" cy="546.5" rx="6.3" ry="5.3" fill="#fff" stroke="#333" stroke-width="1"/><path d="M725.0 546.5 H727.2 M739.8 546.5 H742.0 M728.5 550.5 L726.5 553 M738.5 550.5 L740.5 553 M731.5 551.8 L731.0 554.5 M735.5 551.8 L736.0 554.5" stroke="#444" stroke-width="1.1"/><path d="M752 546 H759 L755.5 549.8Z" fill="#555"/><rect x="761.5" y="533" width="84.5" height="29" rx="2" fill="url(#cmbr)" stroke="#c4c4c4" stroke-width="1"/><text x="766.5" y="552" font-family="Liberation Sans" font-size="13.6" fill="#1a1a1a">Reformat</text><path d="M832.5 545.5 H839.5 L836.0 549.5Z" fill="#555"/><rect x="846.5" y="533" width="242.5" height="29" rx="2" fill="url(#cmbr)" stroke="#c4c4c4" stroke-width="1"/><text x="851.5" y="552" font-family="Liberation Sans" font-size="13.6" fill="#1a1a1a">100408_H1_pos8_normE</text><path d="M1070 545.5 H1077 L1073.5 549.5Z" fill="#555"/></svg><svg class="a" style="left:1086px;top:514px" width="415" height="49" viewBox="1086 514 415 49"><defs><linearGradient id="ping" x1="0" y1="0" x2="0" y2="1"><stop offset="0" stop-color="#e4e4e4"/><stop offset="1" stop-color="#c4c4c4"/></linearGradient>
<linearGradient id="barg" x1="0" y1="0" x2="0" y2="1"><stop offset="0" stop-color="#6ed24a"/><stop offset="0.9" stop-color="#6ed24a"/><stop offset="1" stop-color="#50a838"/></linearGradient>
<linearGradient id="cmbg" x1="0" y1="0" x2="0" y2="1"><stop offset="0" stop-color="#fdfdfd"/><stop offset="1" stop-color="#ececec"/></linearGradient></defs><rect x="1086" y="514" width="415" height="2" fill="#ececec"/><rect x="1086" y="516" width="415" height="16" fill="url(#barg)"/><rect x="1103" y="516" width="17" height="16" fill="#8ee064"/><rect x="1427" y="516" width="74" height="16" fill="#8ee064"/><rect x="1086.5" y="516.5" width="14.5" height="14.5" rx="2" fill="url(#ping)" stroke="#111" stroke-width="1"/><path d="M1091.5 519.5 H1096 M1092.5 519.5 V523.5 L1091 525 H1096.5 L1095 523.5 V519.5 M1093.75 525 V529" stroke="#444" stroke-width="1.2" fill="#444"/><text x="1107.5" y="529" font-family="Liberation Sans" font-size="12.5" fill="#111">G</text><rect x="1125.5" y="519" width="4.5" height="4.5" fill="#fff" opacity="0.25"/><rect x="1130.0" y="519" width="4.5" height="4.5" fill="#000" opacity="0.45"/><rect x="1125.5" y="523.5" width="4.5" height="4.5" fill="#000" opacity="0.35"/><rect x="1130.0" y="523.5" width="4.5" height="4.5" fill="#000" opacity="0.6"/><rect x="1125.5" y="519" width="9" height="9" fill="#50a838" opacity="0.35"/><rect x="1126.5" y="520" width="2.5" height="2.5" fill="#fff" opacity="0.45"/><g fill="#111"><rect x="1123.5" y="523" width="1" height="1"/><rect x="1135.5" y="523" width="1" height="1"/><rect x="1129.5" y="517" width="1" height="1"/><rect x="1129.5" y="529" width="1" height="1"/></g><rect x="1145.5" y="521" width="276.5" height="4.8" rx="2.2" fill="#dcdcdc" stroke="#111" stroke-width="1.2"/><rect x="1146.5" y="522" width="146.5" height="2.8" fill="#4aa0f0"/><rect x="1293.5" y="517.5" width="9" height="12" rx="2.5" fill="#fafafa" stroke="#555" stroke-width="1"/><text x="1429" y="528" font-family="Liberation Sans" font-size="11.5" fill="#2a1a18">8.1576mm</text><rect x="1086" y="532" width="415" height="31" fill="#ececec"/><path d="M1089 545 L1091.5 547.5 L1089 550 M1092.5 545 L1095 547.5 L1092.5 550" stroke="#111" stroke-width="1.5" fill="none"/><circle cx="1118.5" cy="545.5" r="5.2" stroke="#222" stroke-width="1.8" fill="none"/><path d="M1110.5 550.5 A5.2 5.2 0 0 0 1119.5 553" stroke="#222" stroke-width="1.9" fill="none"/><path d="M1113 543.5 A5.2 5.2 0 0 1 1117.5 553.5" stroke="#777" stroke-width="1" fill="none"/><path d="M1111.5 546 L1113.5 543.5 L1115 546" stroke="#222" stroke-width="1.2" fill="none"/><path d="M1125 557 H1130 L1127.5 559.8Z" fill="#555"/><ellipse cx="1148.5" cy="546.5" rx="6.3" ry="5.3" fill="#fff" stroke="#333" stroke-width="1"/><path d="M1140.0 546.5 H1142.2 M1154.8 546.5 H1157.0 M1143.5 550.5 L1141.5 553 M1153.5 550.5 L1155.5 553 M1146.5 551.8 L1146.0 554.5 M1150.5 551.8 L1151.0 554.5" stroke="#444" stroke-width="1.1"/><path d="M1167 546 H1174 L1170.5 549.8Z" fill="#555"/><rect x="1176.5" y="533" width="84.5" height="29" rx="2" fill="url(#cmbg)" stroke="#c4c4c4" stroke-width="1"/><text x="1181.5" y="552" font-family="Liberation Sans" font-size="13.6" fill="#1a1a1a">Reformat</text><path d="M1247.5 545.5 H1254.5 L1251.0 549.5Z" fill="#555"/><rect x="1261.5" y="533" width="243.5" height="29" rx="2" fill="url(#cmbg)" stroke="#c4c4c4" stroke-width="1"/><text x="1266.5" y="552" font-family="Liberation Sans" font-size="13.6" fill="#1a1a1a">100408_H1_pos8_normE</text><path d="M1486 545.5 H1493 L1489.5 549.5Z" fill="#555"/></svg><svg class="a" style="left:1502px;top:514px" width="395" height="49" viewBox="1502 514 395 49"><defs><linearGradient id="piny" x1="0" y1="0" x2="0" y2="1"><stop offset="0" stop-color="#e4e4e4"/><stop offset="1" stop-color="#c4c4c4"/></linearGradient>
<linearGradient id="bary" x1="0" y1="0" x2="0" y2="1"><stop offset="0" stop-color="#f2d63a"/><stop offset="0.9" stop-color="#f2d63a"/><stop offset="1" stop-color="#c8a820"/></linearGradient>
<linearGradient id="cmby" x1="0" y1="0" x2="0" y2="1"><stop offset="0" stop-color="#fdfdfd"/><stop offset="1" stop-color="#ececec"/></linearGradient></defs><rect x="1502" y="514" width="395" height="2" fill="#ececec"/><rect x="1502" y="516" width="395" height="16" fill="url(#bary)"/><rect x="1519" y="516" width="17" height="16" fill="#f8e48a"/><rect x="1847" y="516" width="50" height="16" fill="#f8e48a"/><rect x="1502.5" y="516.5" width="14.5" height="14.5" rx="2" fill="url(#piny)" stroke="#111" stroke-width="1"/><path d="M1507.5 519.5 H1512 M1508.5 519.5 V523.5 L1507 525 H1512.5 L1511 523.5 V519.5 M1509.75 525 V529" stroke="#444" stroke-width="1.2" fill="#444"/><text x="1523.5" y="529" font-family="Liberation Sans" font-size="12.5" fill="#111">Y</text><rect x="1541.5" y="519" width="4.5" height="4.5" fill="#fff" opacity="0.25"/><rect x="1546.0" y="519" width="4.5" height="4.5" fill="#000" opacity="0.45"/><rect x="1541.5" y="523.5" width="4.5" height="4.5" fill="#000" opacity="0.35"/><rect x="1546.0" y="523.5" width="4.5" height="4.5" fill="#000" opacity="0.6"/><rect x="1541.5" y="519" width="9" height="9" fill="#c8a820" opacity="0.35"/><rect x="1542.5" y="520" width="2.5" height="2.5" fill="#fff" opacity="0.45"/><g fill="#111"><rect x="1539.5" y="523" width="1" height="1"/><rect x="1551.5" y="523" width="1" height="1"/><rect x="1545.5" y="517" width="1" height="1"/><rect x="1545.5" y="529" width="1" height="1"/></g><rect x="1561.5" y="521" width="280" height="4.8" rx="2.2" fill="#dcdcdc" stroke="#111" stroke-width="1.2"/><rect x="1562.5" y="522" width="215.5" height="2.8" fill="#4aa0f0"/><rect x="1778.5" y="517.5" width="9" height="12" rx="2.5" fill="#fafafa" stroke="#555" stroke-width="1"/><text x="1849" y="528" font-family="Liberation Sans" font-size="11.5" fill="#2a1a18">74.9665mm</text><rect x="1502" y="532" width="395" height="31" fill="#ececec"/><path d="M1505 545 L1507.5 547.5 L1505 550 M1508.5 545 L1511 547.5 L1508.5 550" stroke="#111" stroke-width="1.5" fill="none"/><circle cx="1534.5" cy="545.5" r="5.2" stroke="#222" stroke-width="1.8" fill="none"/><path d="M1526.5 550.5 A5.2 5.2 0 0 0 1535.5 553" stroke="#222" stroke-width="1.9" fill="none"/><path d="M1529 543.5 A5.2 5.2 0 0 1 1533.5 553.5" stroke="#777" stroke-width="1" fill="none"/><path d="M1527.5 546 L1529.5 543.5 L1531 546" stroke="#222" stroke-width="1.2" fill="none"/><path d="M1541 557 H1546 L1543.5 559.8Z" fill="#555"/><ellipse cx="1564.5" cy="546.5" rx="6.3" ry="5.3" fill="#fff" stroke="#333" stroke-width="1"/><path d="M1556.0 546.5 H1558.2 M1570.8 546.5 H1573.0 M1559.5 550.5 L1557.5 553 M1569.5 550.5 L1571.5 553 M1562.5 551.8 L1562.0 554.5 M1566.5 551.8 L1567.0 554.5" stroke="#444" stroke-width="1.1"/><path d="M1583 546 H1590 L1586.5 549.8Z" fill="#555"/><rect x="1592.5" y="533" width="84.5" height="29" rx="2" fill="url(#cmby)" stroke="#c4c4c4" stroke-width="1"/><text x="1597.5" y="552" font-family="Liberation Sans" font-size="13.6" fill="#1a1a1a">Reformat</text><path d="M1663.5 545.5 H1670.5 L1667.0 549.5Z" fill="#555"/><rect x="1677.5" y="533" width="223.5" height="29" rx="2" fill="url(#cmby)" stroke="#c4c4c4" stroke-width="1"/><text x="1682.5" y="552" font-family="Liberation Sans" font-size="13.6" fill="#1a1a1a">100408_H1_pos8_normE</text></svg><!--/SLICECTL-->
<div class="a" style="left:1085px;top:532px;width:1px;height:457px;background:#c8c8c8"></div>
<div class="a" style="left:1501px;top:532px;width:1px;height:457px;background:#c8c8c8"></div>
<div class="sview" style="left:671px;width:414px"><svg class="a" style="left:0;top:0" width="414" height="426" viewBox="671 563 414 426">
<defs>
<filter id="bl3" color-interpolation-filters="sRGB" x="-20%" y="-20%" width="140%" height="140%"><feGaussianBlur stdDeviation="3"/></filter>
<filter id="bl2" color-interpolation-filters="sRGB" x="-20%" y="-20%" width="140%" height="140%"><feGaussianBlur stdDeviation="1.5"/></filter>
<filter id="bl6" color-interpolation-filters="sRGB" x="-20%" y="-20%" width="140%" height="140%"><feGaussianBlur stdDeviation="6"/></filter>
<filter id="bl15" color-interpolation-filters="sRGB" x="-50%" y="-50%" width="200%" height="200%"><feGaussianBlur stdDeviation="15"/></filter>
<filter id="bl25" color-interpolation-filters="sRGB" x="-50%" y="-50%" width="200%" height="200%"><feGaussianBlur stdDeviation="25"/></filter>
<filter id="ub3" color-interpolation-filters="sRGB" filterUnits="userSpaceOnUse" x="600" y="500" width="1400" height="550"><feGaussianBlur stdDeviation="3"/></filter>
<filter id="ub6" color-interpolation-filters="sRGB" filterUnits="userSpaceOnUse" x="600" y="500" width="1400" height="550"><feGaussianBlur stdDeviation="6"/></filter>
<filter id="ub10" color-interpolation-filters="sRGB" filterUnits="userSpaceOnUse" x="600" y="500" width="1400" height="550"><feGaussianBlur stdDeviation="10"/></filter>
<clipPath id="rclip"><path d="M894 563 L1033 563 L1033 989 L956.4 989 L935.3 953 L912.7 915.3 L890 877.6 L867.5 840 C860 828 850 800 845 780 C840 760 838 745 837.5 715 C837 690 837.5 670 840 655 C845 625 855 600 873 580 Z"/></clipPath>
</defs>
<g clip-path="url(#rclip)">
<rect x="820" y="560" width="220" height="430" fill="#232323"/>
<path d="M1060 563 L894 563 C875 578 855 600 845 630 C838 660 836 700 838 745 C842 780 852 810 867.5 840 L956.4 989" fill="none" stroke="#373737" stroke-width="46" filter="url(#ub6)"/>
<path d="M1000 572 C950 585 905 625 895 690 C888 745 895 790 912 830" fill="none" stroke="#1a1a1a" stroke-width="9" filter="url(#ub6)"/>
<ellipse cx="1018" cy="790" rx="40" ry="190" fill="#171717" filter="url(#bl25)"/>
<g filter="url(#ub3)">
<path d="M912 668 C922 650 948 650 962 664 C970 676 955 690 938 688 C928 690 918 684 912 676Z" fill="#0f0f0f"/>
<path d="M940 655 C950 640 975 640 985 655" stroke="#141414" stroke-width="6" fill="none"/>
<path d="M983 612 C1000 604 1020 618 1018 645 C1002 652 988 642 982 628Z" fill="#131313"/>
<path d="M990 678 C1012 682 1033 700 1033 748 C1012 750 995 722 990 700Z" fill="#101010"/>
<path d="M905 705 C930 698 958 712 964 736 C942 744 918 728 905 716Z" fill="#101010"/>
<path d="M918 691 C935 687 952 693 963 701" stroke="#2e2e2e" stroke-width="5" fill="none"/>
<path d="M965 712 C980 705 995 720 995 740 C982 745 968 732 965 720Z" fill="#141414"/>
<path d="M912 786 C935 776 968 782 980 806 C965 818 935 806 918 806Z" fill="#0e0e0e"/>
<path d="M930 822 C950 815 972 826 974 846 C955 852 938 840 930 830Z" fill="#101010"/>
<path d="M940 860 C965 852 998 860 1005 876 C986 884 955 876 944 870Z" fill="#111"/>
<path d="M948 890 C965 885 985 896 987 915 C968 920 953 906 948 898Z" fill="#121212"/>
<path d="M1000 916 C1015 911 1033 922 1033 944 C1016 948 1002 936 1000 925Z" fill="#111"/>
<path d="M982 952 C1000 946 1033 958 1033 989 L988 989Z" fill="#131313"/>
<path d="M972 745 C995 738 1022 758 1028 782 C1006 788 984 772 972 756Z" fill="#151515"/>
<path d="M1000 800 C1015 795 1030 810 1033 830 C1018 835 1003 822 1000 810Z" fill="#151515"/>
<path d="M995 850 C1010 845 1030 855 1033 875 C1015 880 1000 868 995 858Z" fill="#141414"/>
</g>
<path d="M893 828 L903.7 840 L924.8 877.6 L944.3 915 L968.4 953 L992.5 989 L1000 1000" stroke="#3a3a3a" stroke-width="12" fill="none" stroke-linejoin="round" filter="url(#ub3)"/>
<path d="M893 828 L903.7 840 L924.8 877.6 L944.3 915 L968.4 953 L992.5 989 L1000 1000" stroke="#7a7a7a" stroke-width="5.5" fill="none" stroke-linejoin="round"/>
</g>
<circle cx="885" cy="822.7" r="21.5" fill="#66ff00"/>
</svg><div class="slbl">B: 100408_H1_pos8_normE</div></div>
<div class="sview" style="left:1086px;width:415px"><svg class="a" style="left:0;top:0" width="415" height="426" viewBox="1086 563 415 426">
<defs>
<clipPath id="gclip"><path d="M1449 584 C1390 600 1330 625 1295 685 C1270 725 1256 755 1253 790 L1253 972 L1449 972Z"/></clipPath>
<filter id="gb4" color-interpolation-filters="sRGB" filterUnits="userSpaceOnUse" x="1150" y="500" width="400" height="520"><feGaussianBlur stdDeviation="4"/></filter>
<filter id="gb12" color-interpolation-filters="sRGB" filterUnits="userSpaceOnUse" x="1150" y="500" width="400" height="520"><feGaussianBlur stdDeviation="12"/></filter>
<linearGradient id="gbr" x1="0" y1="0" x2="1" y2="1"><stop offset="0" stop-color="#141414"/><stop offset="1" stop-color="#5a5a5a"/></linearGradient>
</defs>
<g clip-path="url(#gclip)">
<rect x="1240" y="580" width="220" height="400" fill="#1c1c1c"/>
<path d="M1470 580 C1390 598 1328 625 1293 685 C1268 728 1254 760 1252 800 L1252 920" fill="none" stroke="#393939" stroke-width="66" filter="url(#gb12)"/>
<path d="M1449 650 C1380 660 1320 700 1295 760" fill="none" stroke="#252525" stroke-width="14" filter="url(#gb12)"/>
<g filter="url(#gb4)">
<path d="M1338 708 C1352 690 1385 695 1398 715 C1392 735 1360 740 1342 728Z" fill="#3c3c3c"/>
<path d="M1388 676 C1406 686 1424 714 1422 736 C1406 733 1390 708 1384 690Z" fill="#121212"/>
<path d="M1420 662 C1434 672 1449 692 1449 712 C1434 707 1420 687 1418 672Z" fill="#161616"/>
<path d="M1326 737 C1344 747 1356 766 1353 781 C1338 777 1324 760 1320 749Z" fill="#131313"/>
<path d="M1304 770 C1322 780 1336 798 1333 813 C1318 810 1304 795 1300 781Z" fill="#151515"/>
<path d="M1285 816 C1310 804 1342 828 1336 852 C1318 850 1297 832 1288 828Z" fill="#121212"/>
<path d="M1282 858 C1300 853 1320 868 1318 888 C1300 890 1288 879 1282 869Z" fill="#131313"/>
<path d="M1338 832 C1370 818 1406 856 1396 886 C1374 889 1344 862 1335 848Z" fill="#0f0f0f"/>
<path d="M1400 762 C1418 772 1436 800 1432 828 C1414 823 1400 800 1396 777Z" fill="#171717"/>
</g>
<path d="M1253 972 L1253 915 C1268 922 1290 926 1312 928 L1388 934 C1398 938 1403 945 1404 955 L1404 972Z" fill="#080808"/>
<path d="M1404 932 L1449 932 L1449 972 L1404 972Z" fill="url(#gbr)" filter="url(#gb4)"/>
<path d="M1270 780 C1264 810 1262 850 1267 880 C1272 905 1288 920 1315 925 L1368 928 C1385 929 1398 933 1402 948 L1404 972" stroke="#484848" stroke-width="11" fill="none" filter="url(#gb4)"/>
<path d="M1272 785 C1264 815 1263 852 1267 880 C1272 905 1288 920 1315 925 L1368 928 C1385 929 1398 933 1402 948 L1404 972" stroke="#a8a8a8" stroke-width="4.6" fill="none" filter="url(#bl2)"/>
</g>
</svg><div class="slbl">B: 100408_H1_pos8_normE</div></div>
<div class="sview" style="left:1502px;width:395px"><svg class="a" style="left:0;top:0" width="395" height="426" viewBox="1502 563 395 426">
<defs>
<clipPath id="yclip"><polygon points="1521,952 1521,819 1527,799 1541,762 1561,740 1589,720 1629,704 1680,697 1714,698 1756,714 1782,737 1802,765 1816,816 1824,861 1847,952"/></clipPath>
<clipPath id="hclip"><polygon points="1578,833 1587,816 1615,793 1652,779 1703,776 1734,799 1745,822 1748,850 1725,895 1669,909 1612,912 1581,884"/></clipPath>
<radialGradient id="holeg" cx="0.5" cy="0.55" r="0.6"><stop offset="0" stop-color="#0e0e0e"/><stop offset="1" stop-color="#1c1c1c"/></radialGradient>
<linearGradient id="lhal" x1="1538" y1="0" x2="1584" y2="0" gradientUnits="userSpaceOnUse"><stop offset="0" stop-color="#3e3e3e"/><stop offset="0.55" stop-color="#7a7a7a"/><stop offset="1" stop-color="#d0d0d0"/></linearGradient>
<linearGradient id="rhal" x1="1744" y1="0" x2="1770" y2="0" gradientUnits="userSpaceOnUse"><stop offset="0" stop-color="#d8d8d8"/><stop offset="0.5" stop-color="#8a8a8a"/><stop offset="1" stop-color="#3a3a3a"/></linearGradient>
<filter id="ub4" color-interpolation-filters="sRGB" filterUnits="userSpaceOnUse" x="1400" y="600" width="500" height="400"><feGaussianBlur stdDeviation="4"/></filter>
<filter id="ub12" color-interpolation-filters="sRGB" filterUnits="userSpaceOnUse" x="1400" y="600" width="500" height="400"><feGaussianBlur stdDeviation="12"/></filter>
<filter id="ub3y" color-interpolation-filters="sRGB" filterUnits="userSpaceOnUse" x="1400" y="600" width="500" height="400"><feGaussianBlur stdDeviation="4.5"/></filter>
</defs>
<g clip-path="url(#yclip)">
<rect x="1510" y="690" width="350" height="270" fill="#2c2c2c"/>
<path d="M1525 830 C1540 750 1640 712 1700 712 C1760 715 1800 745 1812 800" fill="none" stroke="#454545" stroke-width="34" filter="url(#ub12)"/>
<path d="M1610 940 C1660 930 1720 915 1770 880 L1800 960 L1600 960Z" fill="#151515" filter="url(#ub12)"/>
<path d="M1562 793 C1550 805 1540 825 1538 850 C1537 880 1545 905 1560 922 C1575 936 1600 942 1628 928 L1612 912 L1581 884 L1578 833 L1587 816 L1596 803Z" fill="url(#lhal)" filter="url(#ub3y)"/>
<path d="M1722 772 C1738 762 1758 775 1766 800 C1771 825 1766 848 1752 862 L1748 850 L1745 822 L1734 799Z" fill="url(#rhal)" filter="url(#ub3y)"/>
<ellipse cx="1573" cy="872" rx="7" ry="15" fill="#ffffff" filter="url(#ub3y)"/>
<polygon points="1578,833 1587,816 1615,793 1652,779 1703,776 1734,799 1745,822 1748,850 1725,895 1669,909 1612,912 1581,884" fill="url(#holeg)"/>
<path d="M1590 812 L1615 793 L1652 779 L1703 776 L1730 796" stroke="#2a2a2a" stroke-width="10" fill="none" filter="url(#ub4)"/>
<g clip-path="url(#hclip)" filter="url(#bl3)" stroke="#262626" stroke-width="4" fill="none">
<path d="M1665 850 C1650 830 1630 810 1615 800 M1665 850 C1670 820 1690 800 1700 785 M1665 850 C1690 840 1720 830 1740 830 M1665 850 C1690 865 1710 880 1725 892 M1665 850 C1655 875 1645 895 1640 910 M1665 850 C1640 860 1610 870 1590 880 M1665 850 C1640 840 1610 835 1585 830 M1665 850 C1660 820 1650 800 1650 780"/>
</g>
<path d="M1579 825 L1578 833 L1581 884 L1612 912 L1669 909 L1725 895 L1748 850 L1747 815" stroke="#c0c0c0" stroke-width="3" fill="none" filter="url(#bl2)"/>
<path d="M1752 812 L1748 850 L1725 895 L1669 909 L1612 913" stroke="#f4f4f4" stroke-width="1.8" fill="none"/>
</g>
</svg><div class="slbl">B: 100408_H1_pos8_normE</div></div>
</body></html>
